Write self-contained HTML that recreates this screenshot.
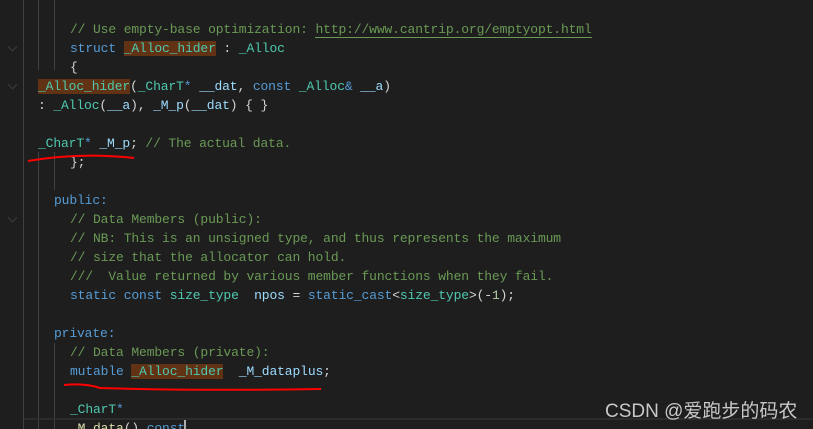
<!DOCTYPE html>
<html><head><meta charset="utf-8"><style>
html,body{margin:0;width:813px;height:429px;background:#1e1e1e;overflow:hidden;position:relative;font-family:"Liberation Mono",monospace;font-size:13px;letter-spacing:-0.13px}
.l{position:absolute;white-space:pre;height:19px;line-height:19px;color:#d4d4d4}
.c{color:#6a9955}.k{color:#569cd6}.t{color:#4ec9b0}.v{color:#9cdcfe}.y{color:#dcdcaa}
.h{background:#613214}
.g{position:absolute;width:1px;background:#404040}
.cv{position:absolute;width:6px;height:6px;border-right:1px solid #3c3c3c;border-bottom:1px solid #3c3c3c;transform:rotate(45deg)}
</style></head><body>
<div class="g" style="left:23px;top:0;height:429px"></div>
<div class="g" style="left:38px;top:0;height:70px"></div>
<div class="g" style="left:38px;top:152px;height:277px"></div>
<div class="g" style="left:54px;top:0;height:70px"></div>
<div class="g" style="left:54px;top:152px;height:38px"></div>
<div class="g" style="left:54px;top:343px;height:86px"></div>
<div class="cv" style="left:9px;top:43px"></div>
<div class="cv" style="left:9px;top:81px"></div>
<div class="cv" style="left:9px;top:214px"></div>
<div style="position:absolute;left:24px;top:418px;width:789px;height:2px;background:#2c2c2c"></div>

<div class="l c" style="left:70px;top:20px">// Use empty-base optimization: <span style="border-bottom:1px solid #6a9955">http://www.cantrip.org/emptyopt.html</span></div>
<div class="l" style="left:70px;top:39px"><span class="k">struct</span> <span class="t h">_Alloc_hider</span> : <span class="t">_Alloc</span></div>
<div class="l" style="left:70px;top:58px">{</div>
<div class="l" style="left:38px;top:77px"><span class="t h">_Alloc_hider</span>(<span class="t">_CharT</span><span class="k">*</span> <span class="v">__dat</span>, <span class="k">const</span> <span class="t">_Alloc</span><span class="k">&amp;</span> <span class="v">__a</span>)</div>
<div class="l" style="left:38px;top:96px">: <span class="t">_Alloc</span>(<span class="v">__a</span>), <span class="v">_M_p</span>(<span class="v">__dat</span>) { }</div>
<div class="l" style="left:38px;top:134px"><span class="t">_CharT</span><span class="k">*</span> <span class="v">_M_p</span>; <span class="c">// The actual data.</span></div>
<div class="l" style="left:70px;top:153px">};</div>
<div class="l k" style="left:54px;top:191px">public:</div>
<div class="l c" style="left:70px;top:210px">// Data Members (public):</div>
<div class="l c" style="left:70px;top:229px">// NB: This is an unsigned type, and thus represents the maximum</div>
<div class="l c" style="left:70px;top:248px">// size that the allocator can hold.</div>
<div class="l c" style="left:70px;top:267px">///  Value returned by various member functions when they fail.</div>
<div class="l" style="left:70px;top:286px"><span class="k">static</span> <span class="k">const</span> <span class="t">size_type</span>  <span class="v">npos</span> = <span class="k">static_cast</span>&lt;<span class="t">size_type</span>&gt;(-<span style="color:#b5cea8">1</span>);</div>
<div class="l k" style="left:54px;top:324px">private:</div>
<div class="l c" style="left:70px;top:343px">// Data Members (private):</div>
<div class="l" style="left:70px;top:362px"><span class="k">mutable</span> <span class="t h">_Alloc_hider</span>  <span class="v">_M_dataplus</span>;</div>
<div class="l" style="left:70px;top:400px"><span class="t">_CharT</span><span class="k">*</span></div>
<div class="l" style="left:70px;top:419px"><span class="y">_M_data</span>() <span class="k">const</span></div>
<div style="position:absolute;left:184px;top:420px;width:2px;height:12px;background:#aeafad"></div>

<svg style="position:absolute;left:0;top:0" width="813" height="429">
<path d="M28 161 Q80 152 134 158" stroke="#f00" stroke-width="2" fill="none"/>
<path d="M64 385 Q85 383 100 388 Q200 391 321 389" stroke="#f00" stroke-width="2" fill="none"/>
</svg>
<div style="position:absolute;left:605px;top:396px;font-family:'Liberation Sans','Noto Sans CJK SC',sans-serif;font-size:19px;letter-spacing:0;color:#c8c8c8;white-space:nowrap">CSDN @爱跑步的码农</div>
</body></html>
